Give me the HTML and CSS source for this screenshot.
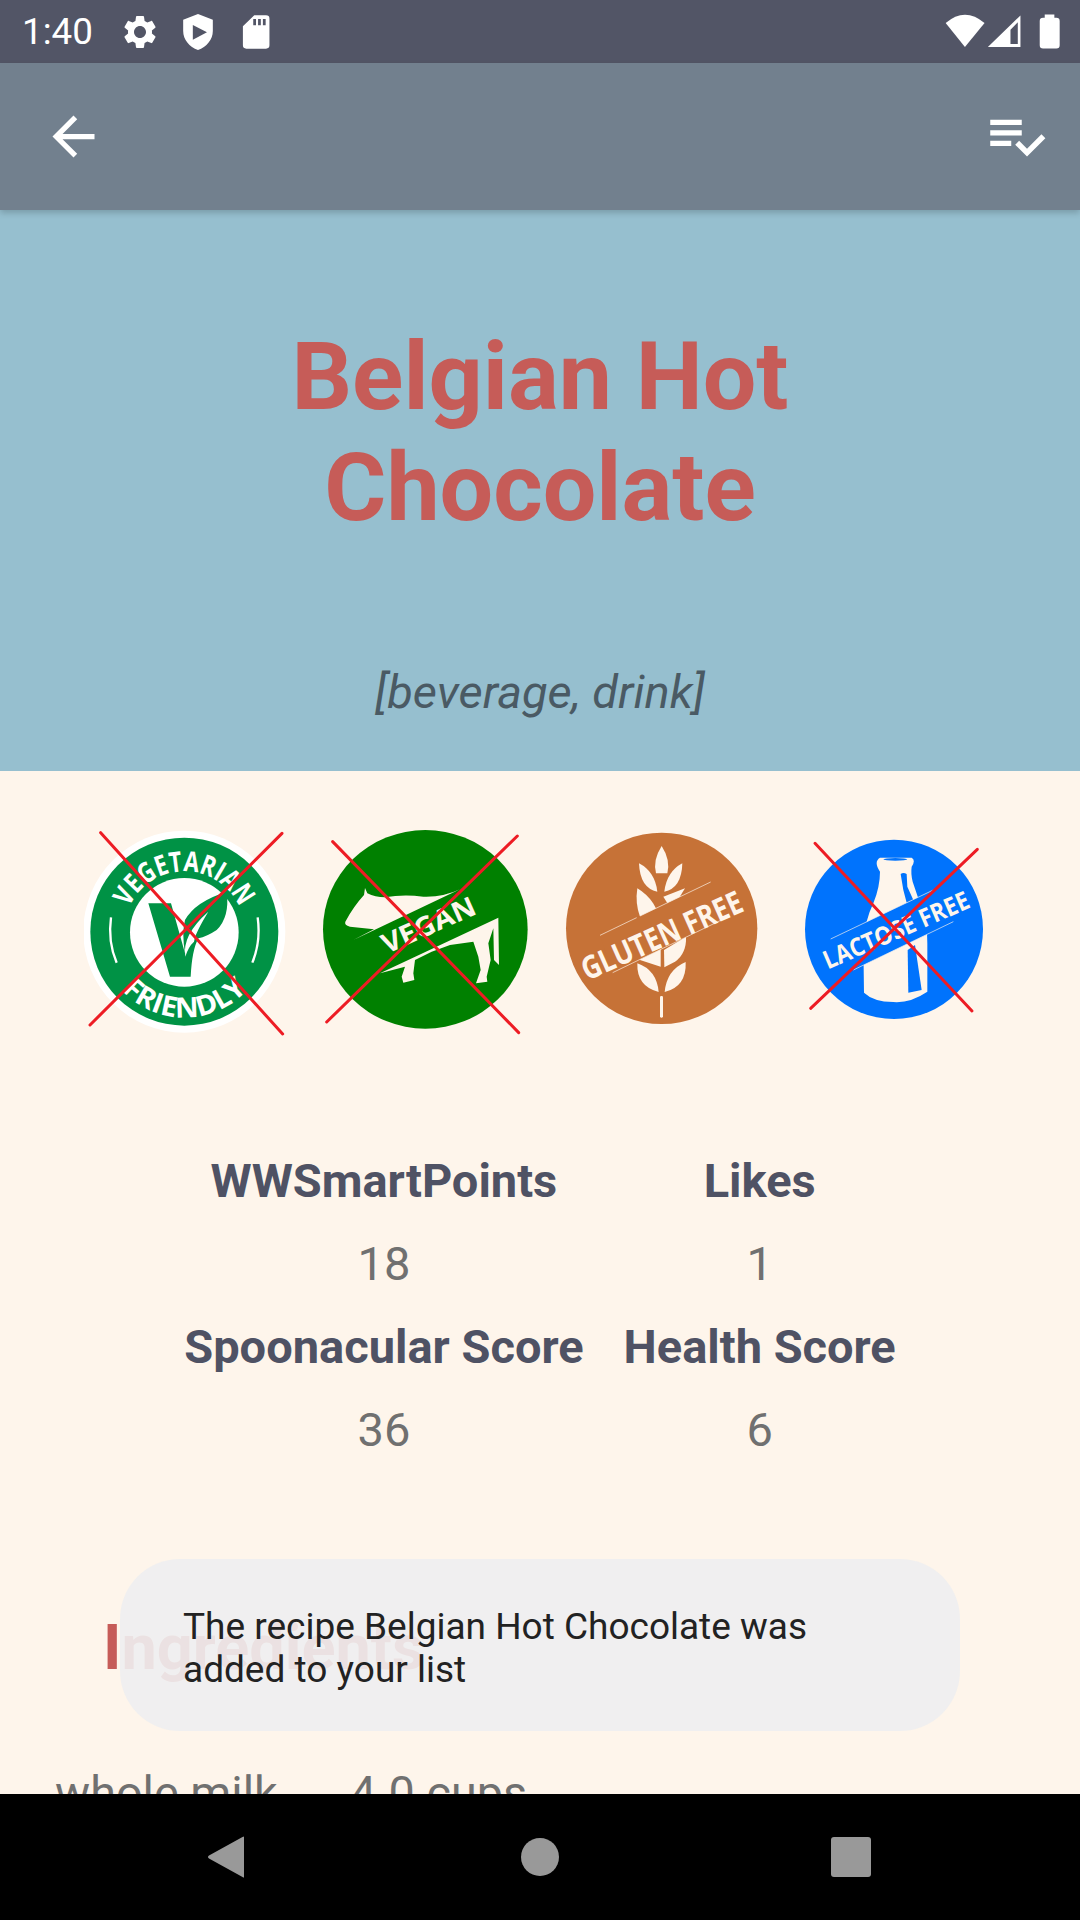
FILE: index.html
```html
<!DOCTYPE html>
<html lang="en">
<head>
<meta charset="utf-8">
<title>Belgian Hot Chocolate</title>
<link rel="stylesheet" href="styles.css">
</head>
<body>
<div class="phone">
  <header class="status">
    <span class="clock">1:40</span>
    <div class="status-left">
      <svg class="s-icon" viewBox="0 0 24 24"><path d="M19.14,12.94c0.04-0.3,0.06-0.61,0.06-0.94c0-0.32-0.02-0.64-0.07-0.94l2.03-1.58c0.18-0.14,0.23-0.41,0.12-0.61l-1.92-3.32c-0.12-0.22-0.37-0.29-0.59-0.22l-2.39,0.96c-0.5-0.38-1.03-0.7-1.62-0.94L14.4,2.81c-0.04-0.24-0.24-0.41-0.48-0.41h-3.84c-0.24,0-0.43,0.17-0.47,0.41L9.25,5.35C8.66,5.59,8.12,5.92,7.63,6.29L5.24,5.33c-0.22-0.08-0.47,0-0.59,0.22L2.74,8.87C2.62,9.08,2.66,9.34,2.86,9.48l2.03,1.58C4.84,11.36,4.8,11.69,4.8,12s0.02,0.64,0.07,0.94l-2.03,1.58c-0.18,0.14-0.23,0.41-0.12,0.61l1.92,3.32c0.12,0.22,0.37,0.29,0.59,0.22l2.39-0.96c0.5,0.38,1.03,0.7,1.62,0.94l0.36,2.54c0.05,0.24,0.24,0.41,0.48,0.41h3.84c0.24,0,0.44-0.17,0.47-0.41l0.36-2.54c0.59-0.24,1.13-0.56,1.62-0.94l2.39,0.96c0.22,0.08,0.47,0,0.59-0.22l1.92-3.32c0.12-0.22,0.07-0.47-0.12-0.61L19.14,12.94z M12,15.6c-1.98,0-3.6-1.62-3.6-3.6s1.62-3.6,3.6-3.6s3.6,1.62,3.6,3.6S13.98,15.6,12,15.6z"/></svg>
      <svg class="s-icon" viewBox="517 35 116 120" preserveAspectRatio="none"><path fill-rule="evenodd" d="M575 41 L618 58 V92 C618 118 600 140 575 149 C550 140 532 118 532 92 V58 Z M560 74 V118 L601 96 Z"/></svg>
      <svg class="s-icon" viewBox="685 35 116 120" preserveAspectRatio="none"><path fill-rule="evenodd" d="M738 45 H772 Q782 45 782 55 V135 Q782 145 772 145 H715 Q705 145 705 135 V78 Z M735 56 V75 H743 V56 Z M749 56 V75 H757 V56 Z M763 56 V75 H771 V56 Z"/></svg>
    </div>
    <svg class="status-right" viewBox="490 35 355 120">
      <path d="M495 68 Q553 18 612 68 L553 140 Z"/>
      <path fill-rule="evenodd" d="M622 140 L720 45 V140 Z M690 131 H712 V66 L690 88 Z"/>
      <path d="M793 42 H822 V52 H828 Q838 52 838 62 V135 Q838 145 828 145 H788 Q778 145 778 135 V62 Q778 52 788 52 H793 Z"/>
    </svg>
  </header>

  <nav class="appbar">
    <svg class="back" viewBox="0 0 24 24"><path d="M20 11H7.83l5.59-5.59L12 4l-8 8 8 8 1.41-1.41L7.83 13H20v-2z"/></svg>
    <svg class="addlist" viewBox="0 0 24 24"><path d="M14 10H2v2h12v-2zm0-4H2v2h12V6zM2 16h8v-2H2v2zm19.5-4.5L23 13l-6.99 7-4.51-4.5L13 14l3.01 3 5.49-5.5z"/></svg>
  </nav>

  <main class="content">
    <section class="hero">
      <h1 class="title">Belgian Hot<br>Chocolate</h1>
      <p class="tags">[beverage, drink]</p>
    </section>

    <section class="badges">
      <svg class="badge b-veg" viewBox="42 48 606 636">
        <defs>
          <path id="arcTop" d="M168.200 318 A181 181 0 0 1 517.800 318"/>
          <path id="arcBottom" d="M132 513 A258 258 0 0 0 554 513"/>
        </defs>
        <circle class="white" cx="343" cy="365" r="303"/>
        <circle class="veg-green" cx="343" cy="365" r="282"/>
        <circle class="white" cx="343" cy="367" r="163"/>
        <path class="veg-side" d="M123 322 Q113 395 140 458"/>
        <path class="veg-side" d="M563 322 Q573 395 547 458"/>
        <text class="veg-text"><textPath href="#arcTop" startOffset="28" textLength="417" lengthAdjust="spacingAndGlyphs">VEGETARIAN</textPath></text>
        <text class="veg-text"><textPath href="#arcBottom" startOffset="36" textLength="423" lengthAdjust="spacingAndGlyphs">FRIENDLY</textPath></text>
        <path class="veg-green" d="M235 280 H303 L345 430 Q335 370 345 330 Q375 275 470 245 Q480 320 440 360 Q410 380 385 385 Q366 420 362 500 H300 Z"/>
        <path class="white" d="M346 440 Q335 375 415 305 Q375 370 372 395 Q355 410 346 440 Z"/>
        <path class="cross" d="M92 68 L638 672 M60 645 L636 70"/>
      </svg>

      <svg class="badge b-vegan" viewBox="738 48 642 636">
        <ellipse class="vegan-green" cx="1066" cy="358" rx="307" ry="298"/>
        <path class="cream" d="M850 390 L912 358 L840 350 Q822 345 826 335 Q850 290 882 255 L885 234 L892 250 Q915 262 945 262 Q1000 252 1060 260 Q1120 262 1170 238 Z"/>
        <path class="cream" d="M930 490 L1285 323 L1287 465 L1272 450 L1270 355 L1255 400 L1262 450 L1250 500 L1252 515 L1218 520 L1232 480 L1225 440 L1210 395 L1140 405 L1085 425 L1035 450 L1030 490 L1033 510 L1000 518 L995 500 L1005 470 Z"/>
        <text class="band-text vegan-label" transform="translate(1087 371) rotate(-24)" text-anchor="middle" textLength="300" lengthAdjust="spacingAndGlyphs">VEGAN</text>
        <path class="cross" d="M788 95 L1346 668 M770 636 L1342 78"/>
      </svg>

      <svg class="badge b-gluten" viewBox="60 48 612 636">
        <circle class="gluten-fill" cx="365" cy="355" r="287"/>
        <path class="cream" d="M365 108 Q392 150 382 190 H348 Q338 150 365 108 Z"/>
        <path class="cream" d="M297 160 Q345 185 352 245 Q300 235 297 160 Z"/>
        <path class="cream" d="M427 160 Q380 185 373 245 Q425 235 427 160 Z"/>
        <path class="cream" d="M292 235 Q350 270 362 340 L300 320 Q285 280 292 235 Z"/>
        <path class="cream" d="M370 260 L435 235 L395 300 Z"/>
        <path class="cream" d="M295 400 L362 410 V470 L300 450 Z"/>
        <path class="cream" d="M372 420 L438 380 Q440 430 405 455 L373 472 Z"/>
        <path class="cream" d="M292 460 Q350 480 356 546 Q290 530 292 460 Z"/>
        <path class="cream" d="M437 456 Q380 480 374 546 Q440 530 437 456 Z"/>
        <rect class="cream" x="360" y="558" width="9" height="65" rx="4"/>
        <path class="gluten-fill" d="M180 376 L512 216 L565 320 L218 488 Z"/>
        <path class="band-line" d="M180 376 L290 323 M300 318 L512 216 M218 488 L565 320"/>
        <text class="band-text gluten-label" transform="translate(379 407) rotate(-24)" text-anchor="middle" textLength="520" lengthAdjust="spacingAndGlyphs">GLUTEN FREE</text>
      </svg>

      <svg class="badge b-lactose" viewBox="762 48 576 636">
        <ellipse class="lactose-fill" cx="1062" cy="358" rx="267" ry="269"/>
        <path class="cream" d="M1020 143 H1115 Q1128 150 1115 170 Q1112 190 1118 215 L1150 310 Q1162 350 1162 400 V545 Q1110 580 1060 576 Q1000 575 972 548 L970 400 Q975 330 1000 280 Q1020 230 1020 185 Q1000 155 1020 143 Z"/>
        <ellipse class="lactose-fill" cx="1066" cy="148" rx="36" ry="4"/>
        <path class="lactose-fill" d="M1082 192 Q1090 186 1100 192 L1102 230 L1120 270 L1100 278 L1090 240 Z"/>
        <path class="lactose-fill" d="M872 387 L1180 240 L1240 335 L940 480 Z"/>
        <path class="lactose-fill" d="M1103 420 L1125 405 L1145 540 L1105 548 Z"/>
        <path class="band-line" d="M872 387 L1180 240 M940 480 L1240 335"/>
        <text class="band-text lactose-label" transform="translate(1079 385) rotate(-23.500)" text-anchor="middle" textLength="470" lengthAdjust="spacingAndGlyphs">LACTOSE FREE</text>
        <path class="cross" d="M825 100 L1296 603 M812 595 L1312 118"/>
      </svg>
    </section>

    <section class="stats">
      <div class="stat-head">WWSmartPoints</div>
      <div class="stat-head">Likes</div>
      <div class="stat-val">18</div>
      <div class="stat-val">1</div>
      <div class="stat-head">Spoonacular Score</div>
      <div class="stat-head">Health Score</div>
      <div class="stat-val">36</div>
      <div class="stat-val">6</div>
    </section>

    <h2 class="ing-title">Ingredients</h2>
    <div class="ing-row">
      <span class="ing-name">whole milk</span>
      <span>4.0 cups</span>
    </div>
  </main>

  <footer class="navbar">
    <svg class="nav-icon" viewBox="-3 0 40 44"><path d="M37 2 V42 Q37 43 35.500 42 L2 23.500 Q0 22 2 20.500 L35.500 2 Q37 1 37 2 Z"/></svg>
    <svg class="nav-icon" viewBox="0 0 40 44"><circle cx="20" cy="22" r="19"/></svg>
    <svg class="nav-icon nav-square" viewBox="0 0 40 44"><rect x="0" y="2" width="40" height="40" rx="3"/></svg>
  </footer>

  <div class="toast">The recipe Belgian Hot Chocolate was added to your list</div>
</div>
</body>
</html>
```

FILE: styles.css
```css
* { box-sizing: border-box; }
html, body { margin: 0; padding: 0; }
body { font-family: Roboto, "Noto Sans", sans-serif; background: #000; }

.phone {
  position: relative;
  width: 1080px;
  height: 1920px;
  display: flex;
  flex-direction: column;
  overflow: hidden;
  background: #fef5eb;
}

/* status bar */
.status {
  flex: 0 0 63px;
  display: flex;
  align-items: center;
  padding: 0 18px 0 22px;
  background: #525566;
  color: #fff;
}
.clock { font-size: 36.75px; width: 70px; }
.status-left { display: flex; gap: 18px; margin-left: 28px; }
.s-icon { width: 40px; height: 40px; fill: #fff; display: block; }
.status-right { width: 118px; height: 40px; margin-left: auto; fill: #fff; display: block; }

/* app bar */
.appbar {
  flex: 0 0 147px;
  display: flex;
  align-items: center;
  justify-content: space-between;
  padding: 0 32px 0 42px;
  background: #72808e;
  box-shadow: 0 3px 6px rgba(0, 0, 0, .18);
  position: relative;
  z-index: 1;
}
.back { width: 63px; height: 63px; fill: #fff; }
.addlist { width: 63px; height: 63px; fill: #fff; margin-top: -3px; }

/* content */
.content { flex: 1 1 0; min-height: 0; overflow: hidden; }

.hero {
  height: 561px;
  background: #96bfcf;
  padding-top: 111px;
  text-align: center;
}
.title {
  margin: 0;
  font-size: 95px;
  line-height: 111px;
  font-weight: 700;
  color: #c65c58;
}
.tags {
  margin: 121px 0 0;
  font-size: 47px;
  line-height: 56px;
  font-style: italic;
  color: #4a5a64;
}

.badges {
  display: flex;
  gap: 30px;
  padding: 55px 0 0 84px;
  height: 267px;
}
.badge { height: 212px; display: block; flex: none; }
.b-veg { width: 202px; }
.b-vegan { width: 214px; }
.b-gluten { width: 204px; }
.b-lactose { width: 192px; }

.white { fill: #fff; }
.cream { fill: #fef5eb; }
.veg-green { fill: #009245; }
.vegan-green { fill: #008000; }
.gluten-fill { fill: #c67237; }
.lactose-fill { fill: #0073fd; }
.cross { fill: none; stroke: #ed1c24; stroke-width: 9; stroke-linecap: round; }
.veg-side { fill: none; stroke: #fff; stroke-width: 7; }
.veg-text {
  fill: #fff;
  font-family: "Open Sans", sans-serif;
  font-weight: 700;
  font-size: 84px;
}
.band-line { fill: none; stroke: #fef5eb; stroke-width: 2; }
.band-text {
  fill: #fef5eb;
  font-family: "Open Sans", sans-serif;
  font-weight: 700;
}
.vegan-label { font-size: 82px; }
.gluten-label { font-size: 95px; }
.lactose-label { font-size: 76px; }

.stats {
  display: grid;
  grid-template-columns: auto auto;
  grid-auto-rows: 83px;
  justify-content: center;
  align-items: center;
  column-gap: 40px;
  padding-top: 101px;
  text-align: center;
}
.stat-head { font-size: 47px; font-weight: 700; color: #4f5264; }
.stat-val { font-size: 47px; color: #707070; }

.ing-title {
  margin: 140px 0 0 103px;
  font-size: 63px;
  line-height: 74px;
  font-weight: 700;
  color: #c65c58;
}
.ing-row {
  display: flex;
  padding: 81px 0 0 55px;
  font-size: 46.75px;
  line-height: 54px;
  color: #707070;
}
.ing-name { width: 295px; }

/* nav bar */
.navbar {
  flex: 0 0 126px;
  display: grid;
  grid-template-columns: repeat(3, 40px);
  justify-content: center;
  column-gap: 276px;
  align-items: center;
  background: #000;
}
.nav-icon { width: 40px; height: 44px; fill: #999; display: block; }
.nav-square { margin-left: -5px; }

/* toast */
.toast {
  position: absolute;
  left: 120px;
  top: 1559px;
  width: 840px;
  height: 172px;
  padding: 46px 63px 0;
  border-radius: 60px;
  background: rgba(238, 239, 240, .91);
  color: #222;
  font-size: 37px;
  line-height: 43px;
}
```
